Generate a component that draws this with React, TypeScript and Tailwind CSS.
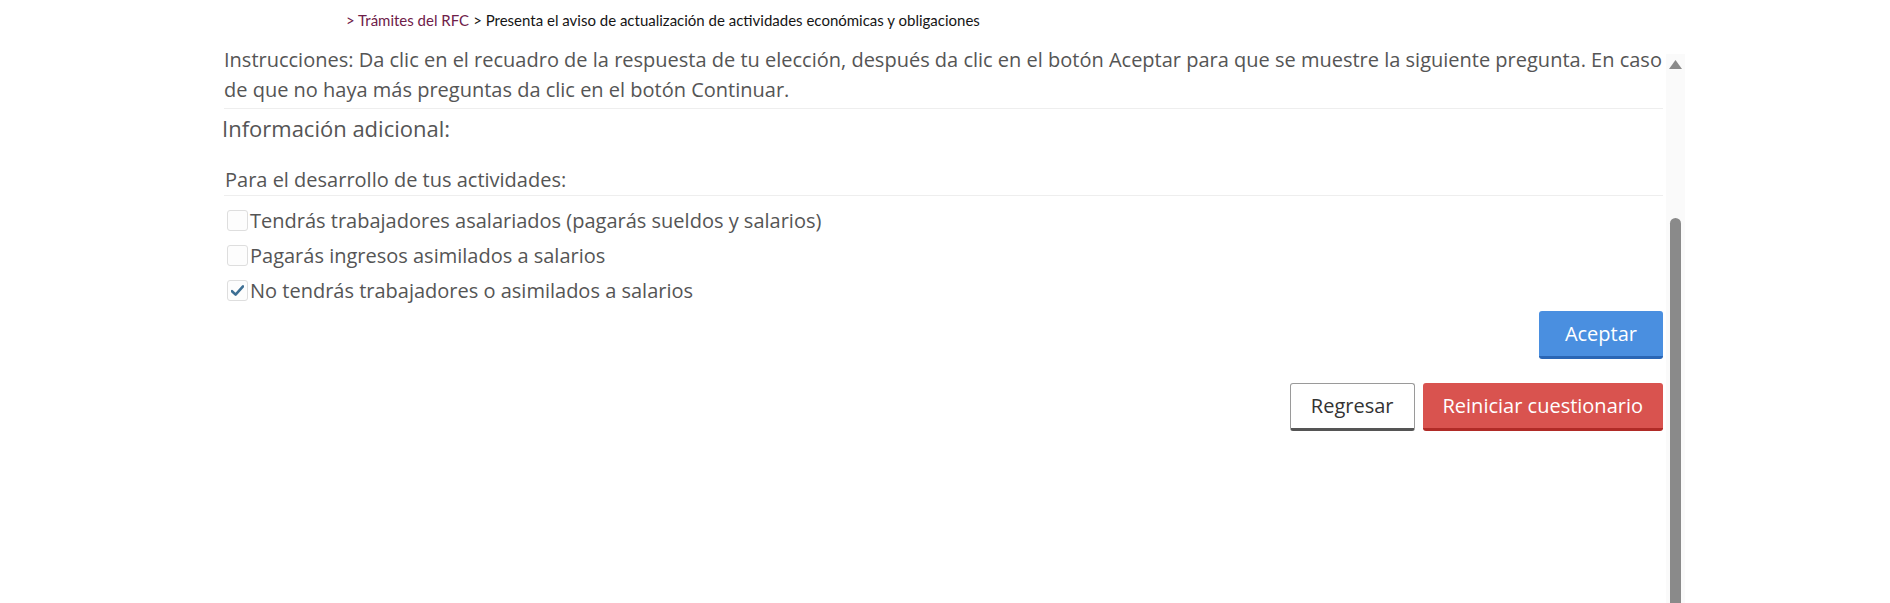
import React from "react";

const opciones = [
  { label: "Tendrás trabajadores asalariados (pagarás sueldos y salarios)", checked: false },
  { label: "Pagarás ingresos asimilados a salarios", checked: false },
  { label: "No tendrás trabajadores o asimilados a salarios", checked: true },
];

function Casilla({ checked }: { checked: boolean }) {
  return (
    <span className="ml-[3px] flex h-[21px] w-[21px] shrink-0 items-center justify-center rounded-[3px] border border-[#dedede] bg-[#fdfdfd]">
      {checked && (
        <svg width="13" height="11" viewBox="0 0 13 11">
          <path d="M1 6.2 L4.6 9.6 L12 1.4" fill="none" stroke="#3d6f94" strokeWidth="2.6" strokeLinecap="round" strokeLinejoin="round" />
        </svg>
      )}
    </span>
  );
}

export default function App() {
  return (
    <div className="flex h-[603px] flex-col overflow-hidden bg-white font-['Open_Sans',sans-serif] text-[#555]">
      {/* migas de pan */}
      <div className="flex h-[41px] shrink-0 items-center pl-[346px] font-['Lato',sans-serif] text-[15px]">
        <span className="text-[#6e2049]">&gt; Trámites del RFC</span>
        <span className="ml-[4px] text-[#151515]">&gt; Presenta el aviso de actualización de actividades económicas y obligaciones</span>
      </div>

      <div className="flex flex-1 pl-[224px] pt-[4px]">
        <div className="w-[1439px]">
          <p className="border-b border-[#eeeeee] pb-[3px] text-[20px] leading-[30px]">
            Instrucciones: Da clic en el recuadro de la respuesta de tu elección, después da clic en el botón Aceptar para que se muestre la siguiente pregunta. En caso de que no haya más preguntas da clic en el botón Continuar.
          </p>
          <h3 className="-ml-[2px] mt-[4px] text-[22px] leading-[30px]">Información adicional:</h3>

          <p className="mt-[23px] border-b border-[#eeeeee] pb-[1px] pl-[1px] text-[20px] leading-[28px]">
            Para el desarrollo de tus actividades:
          </p>

          <div className="mt-[7px] flex flex-col">
            {opciones.map((op, idx) => (
              <label key={idx} className="flex h-[35px] items-center gap-[2px] text-[20px]">
                <Casilla checked={op.checked} />
                <span>{op.label}</span>
              </label>
            ))}
          </div>

          <div className="mt-[3px] flex justify-end">
            <button className="flex h-[48px] items-center rounded-[3px] border-b-[3px] border-[#2a66b5] bg-[#4a8fe0] px-[26px] text-[20px] text-white">
              Aceptar
            </button>
          </div>

          <div className="mt-[24px] flex justify-end gap-[8px]">
            <button className="flex h-[48px] items-center rounded-[3px] border border-b-[3px] border-[#9a9a9a] border-b-[#555] bg-white px-[20px] text-[20px] text-[#333]">
              Regresar
            </button>
            <button className="flex h-[48px] items-center rounded-[3px] border-b-[3px] border-[#b02b27] bg-[#d9534f] px-[20px] text-[20px] text-white">
              Reiniciar cuestionario
            </button>
          </div>
        </div>

        {/* barra de desplazamiento */}
        <div className="ml-[3px] mt-[9px] flex w-[19px] flex-col items-center bg-[#fafafa]">
          <svg width="13" height="9" viewBox="0 0 13 9" className="mt-[6px]">
            <polygon points="6.5,0 13,9 0,9" fill="#8a8a8a" />
          </svg>
          <div className="mt-[149px] w-[11px] flex-1 rounded-t-full bg-[#8a8a8a]" />
        </div>
      </div>
    </div>
  );
}
